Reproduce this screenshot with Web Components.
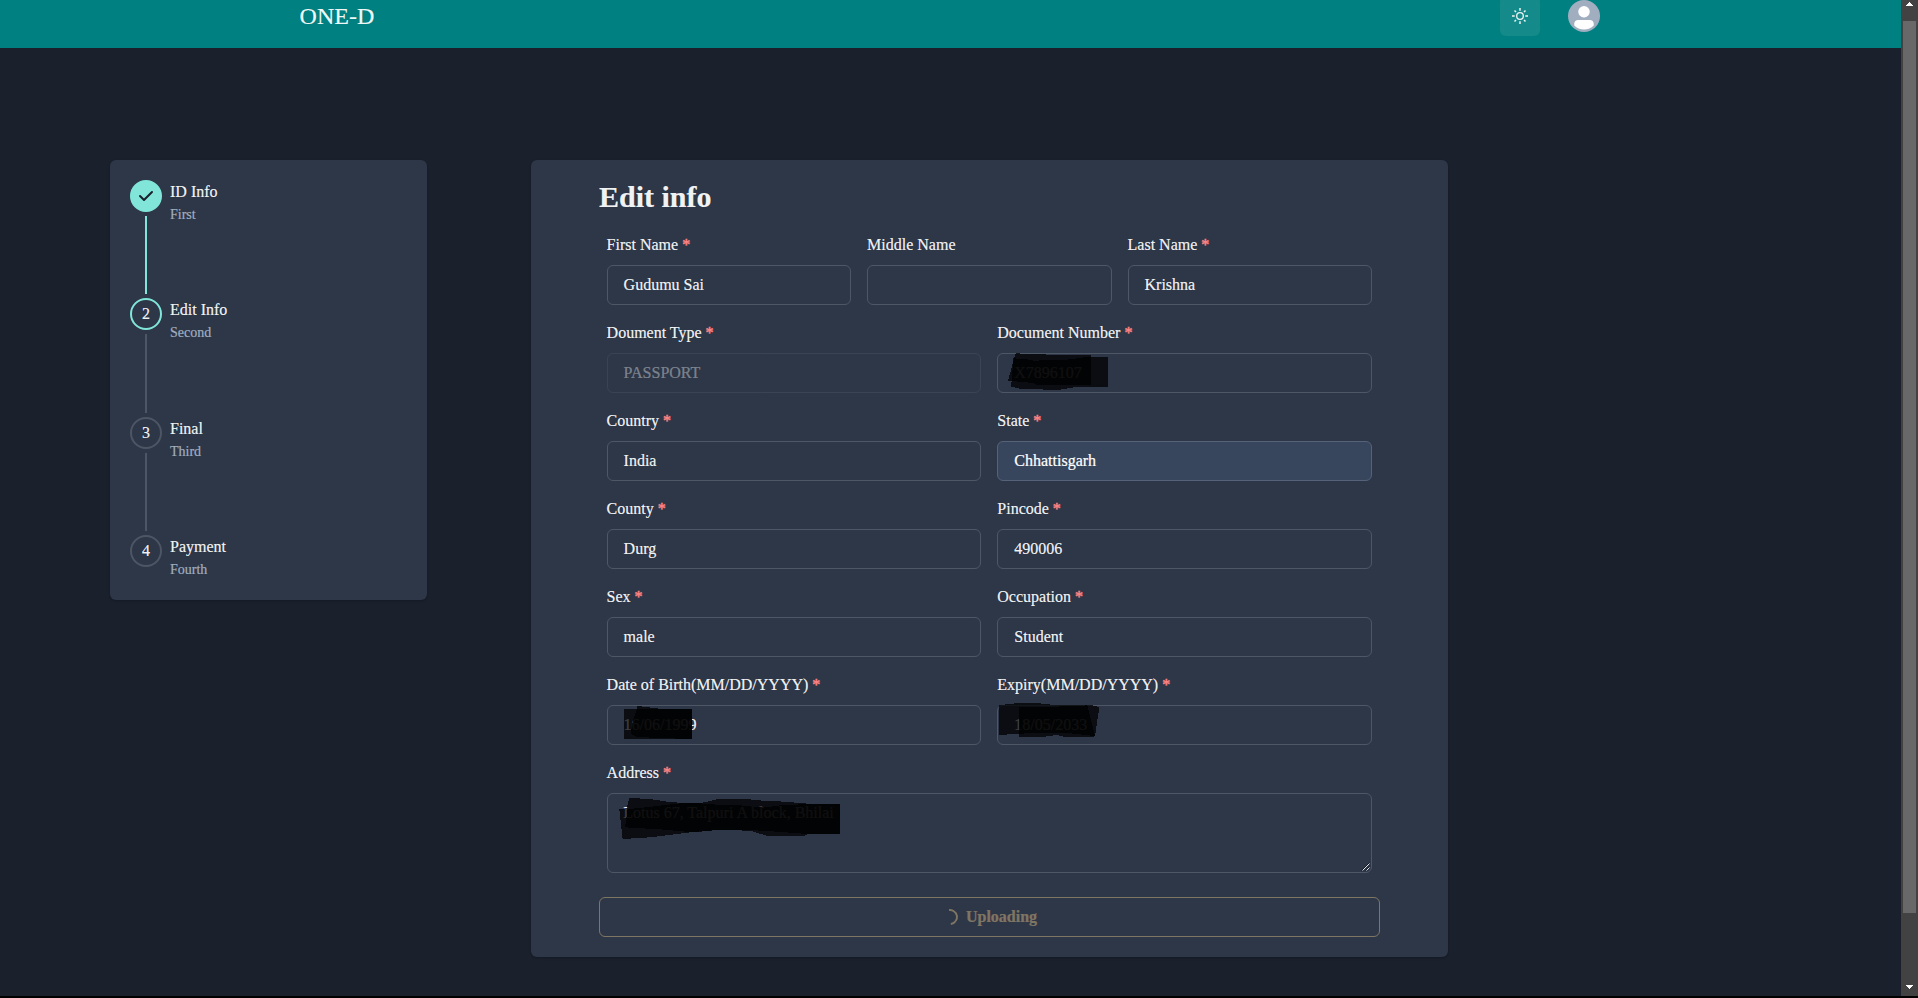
<!DOCTYPE html>
<html lang="en">
<head>
<meta charset="utf-8">
<title>ONE-D</title>
<style>
html,body{margin:0;height:998px;overflow:hidden;background:#000}
body{font:16px/24px "Liberation Serif","Times New Roman",serif;color:rgba(255,255,255,.94);-webkit-text-stroke:.2px}
</style>
</head>
<body>
<app-shell>
  <nav-bar slot="nav">ONE-D</nav-bar>
  <step-list>
    <step-item state="done" num="1" name="ID Info">First</step-item>
    <step-item state="active" num="2" name="Edit Info">Second</step-item>
    <step-item num="3" name="Final">Third</step-item>
    <step-item num="4" name="Payment" last>Fourth</step-item>
  </step-list>
  <edit-card heading="Edit info">
    <form-field label="First Name" required span="2">Gudumu Sai</form-field>
    <form-field label="Middle Name" span="2"></form-field>
    <form-field label="Last Name" required span="2">Krishna</form-field>
    <form-field label="Doument Type" required disabled>PASSPORT</form-field>
    <form-field label="Document Number" required>X7896107<marker-strokes slot="over" dx="-51" dy="-399"
      a="108,396 112,400 145,402 180,402 215,405 333,405 333,494 170,494 160,489 84,482"
      b="100,415 135,417 160,422 262,419 320,411 384,411 384,501 290,501 240,509 130,508 92,500 95,485"></marker-strokes></form-field>
    <form-field label="Country" required>India</form-field>
    <form-field label="State" required filled>Chhattisgarh</form-field>
    <form-field label="County" required>Durg</form-field>
    <form-field label="Pincode" required>490006</form-field>
    <form-field label="Sex" required>male</form-field>
    <form-field label="Occupation" required>Student</form-field>
    <form-field label="Date of Birth(MM/DD/YYYY)" required>16/06/1999<marker-strokes slot="over" dx="-51" dy="-135"
      a="102,147 306,147 306,237 102,237"
      b="143,138 190,144 220,147 306,147 306,237 200,234 140,230 122,222 128,185"></marker-strokes></form-field>
    <form-field label="Expiry(MM/DD/YYYY)" required>18/05/2033<marker-strokes slot="over" dx="-51" dy="-135"
      a="57,135 95,132 110,129 180,130 215,134 322,135 345,228 260,219 160,218 105,223 57,224"
      b="117,142 180,141 300,138 333,135 358,141 345,228 340,231 255,231 230,225 195,230 117,231"></marker-strokes></form-field>
    <form-field label="Address" required span="6" area>Lotus 67, Talpuri A block, Bhilai<marker-strokes slot="over" dx="-51" dy="-399"
      a="118,414 180,417 245,427 330,430 380,418 465,417 530,423 585,425 663,432 750,432 750,521 655,521 645,527 530,527 480,512 380,510 300,517 180,532 98,537 88,447 110,445"
      b="113,447 140,445 210,437 270,430 330,430 380,434 470,437 520,443 570,436 660,432 750,432 750,521 640,521 560,515 480,510 380,510 310,517 210,508 105,502"></marker-strokes></form-field>
    <busy-button slot="action">Uploading</busy-button>
  </edit-card>
</app-shell>

<script>
const define = (name, render) => customElements.define(name, class extends HTMLElement {
  connectedCallback() {
    if (!this.shadowRoot) this.attachShadow({mode: "open"}).innerHTML = render(this);
  }
});
const at = (el, n) => el.getAttribute(n);

define("scroll-track", () => `
<style>
:host{display:flex;flex-direction:column;align-items:center;justify-content:space-between;width:17px;height:996px;background:#424242}
svg{display:block;flex:none}
.thumb{width:13px;height:892px;background:#686868;margin-bottom:auto}
</style>
<svg width="17" height="21" shape-rendering="crispEdges"><path d="M8 2h1v1h1v1h1v1h1v1H5V5h1V4h1V3h1z" fill="#fff"/></svg>
<div class="thumb"></div>
<svg width="17" height="17" shape-rendering="crispEdges"><path d="M5 6h7v1h-1v1h-1v1H9v1H8V9H7V8H6V7H5z" fill="#fff"/></svg>`);

define("app-shell", () => `
<style>
:host{display:flex;height:996px;overflow:hidden;background:#1a202c}
.page{flex:1;min-width:0}
main{display:flex;align-items:flex-start;padding:112px 0 0 110px;gap:104px}
</style>
<div class="page"><slot name="nav"></slot><main><slot></slot></main></div>
<scroll-track></scroll-track>`);

define("nav-bar", () => `
<style>
:host{display:flex;align-items:center;box-sizing:border-box;height:64px;margin-top:-16px;padding:0 301px 0 299.6px;background:#008080}
.brand{font-size:24px;line-height:36px;margin-right:auto}
.toggle{display:flex;align-items:center;justify-content:center;width:40px;height:40px;border-radius:6px;background:rgba(255,255,255,.08);margin-right:28px}
.avatar{width:32px;height:32px;border-radius:50%;background:#a0aec0;overflow:hidden}
svg{display:block}
</style>
<div class="brand"><slot></slot></div>
<div class="toggle"><svg width="16" height="16" viewBox="0 0 16 16" fill="none" stroke="#fff" stroke-opacity=".92" stroke-width="1.33"><circle cx="8" cy="8" r="3.3"/><path stroke-width="1.5" d="M8 0v2.7M8 13.3V16M0 8h2.7M13.3 8H16M2.5 2.5l1.5 1.5M12 12l1.5 1.5M2.5 13.5L4 12M12 4l1.5-1.5"/></svg></div>
<div class="avatar"><svg width="32" height="32" viewBox="0 0 128 128" fill="#fff"><path d="M103,102.1388 C93.094,111.92 79.3504,118 64.1638,118 C48.8056,118 34.9294,111.768 25,101.7892 L25,95.2 C25,86.8096 31.981,80 40.6,80 L87.4,80 C96.019,80 103,86.8096 103,95.2 L103,102.1388 Z"/><circle cx="64" cy="47" r="23"/></svg></div>`);

define("step-list", () => `
<style>
:host{display:flex;flex-direction:column;box-sizing:border-box;flex:none;width:317px;height:440px;padding:20px;border-radius:6px;background:#2d3748;box-shadow:0 1px 3px rgba(0,0,0,.1),0 1px 2px rgba(0,0,0,.06)}
</style><slot></slot>`);

define("step-item", el => {
  const s = at(el, "state");
  return `
<style>
:host{display:flex;gap:8px;flex:1}
:host([last]){flex:none}
.rail{display:flex;flex-direction:column;align-items:center;gap:4px;padding-bottom:4px}
.dot{box-sizing:border-box;flex:none;width:32px;height:32px;border-radius:50%;display:flex;align-items:center;justify-content:center;border:2px solid #4c5664}
:host([state]) .dot{border-color:#81e6d9}
:host([state=done]) .dot{background:#81e6d9}
.line{width:2px;flex:1;background:#4c5664}
:host([state=done]) .line{background:#81e6d9}
.desc{font-size:14px;line-height:21px;color:#a0aec0}
:host([last]) .rail{padding:0;height:45px}
</style>
<div class="rail"><div class="dot">${s === "done" ? `<svg width="20" height="20" viewBox="0 0 20 20" fill="#1a202c"><path d="M16.707 5.293a1 1 0 010 1.414l-8 8a1 1 0 01-1.414 0l-4-4a1 1 0 011.414-1.414L8 12.586l7.293-7.293a1 1 0 011.414 0z"/></svg>` : at(el, "num")}</div>${el.hasAttribute("last") ? "" : `<div class="line"></div>`}</div>
<div><div>${at(el, "name")}</div><div class="desc"><slot></slot></div></div>`;
});

define("edit-card", el => `
<style>
:host{display:block;box-sizing:border-box;flex:none;width:917px;height:797px;padding:19px 68px 20px;border-radius:6px;background:#2d3748;box-shadow:0 1px 3px rgba(0,0,0,.1),0 1px 2px rgba(0,0,0,.06)}
h2{margin:0;font-size:30px;line-height:36px}
.grid{display:grid;grid-template-columns:repeat(6,1fr);gap:16px;padding:18px 8px 24px 7.6px}
</style>
<h2>${at(el, "heading")}</h2>
<div class="grid"><slot></slot></div>
<slot name="action"></slot>`);

define("form-field", el => `
<style>
:host{display:block;grid-column:span ${at(el, "span") || 3};min-width:0}
.label{margin-bottom:8px}
.label b{font-weight:400;color:#fc8181;margin-left:4px;-webkit-text-stroke:.5px}
.box{position:relative;box-sizing:border-box;height:40px;padding:0 16px;border:1px solid #4d5766;border-radius:6px;line-height:38px;white-space:nowrap}
:host([area]) .box{height:80px;padding:8px 15.6px;line-height:22px}
:host([disabled]) .box{opacity:.4}
:host([filled]) .box{background:#38465d;border-color:#56627a;color:#fff}
.grip{position:absolute;right:0;bottom:0;display:block}
</style>
<div class="label">${at(el, "label")}${el.hasAttribute("required") ? "<b>*</b>" : ""}</div>
<div class="box"><slot></slot><slot name="over"></slot>${el.hasAttribute("area") ? `<svg class="grip" width="10" height="10" fill="none"><path d="M0.5 8.5L8.5 0.5M4.5 8.5L8.5 4.5" stroke="#161b24" stroke-width="1"/><path d="M1.5 8.5L8.5 1.5M5.5 8.5L8.5 5.5" stroke="#dfe2e6" stroke-width="1"/></svg>` : ""}</div>`);

/* Marker strokes laid over a value; points are in thirds of a pixel. */
define("marker-strokes", el => `
<style>
:host{position:absolute;left:-1px;top:-1px;display:block}
svg{display:block;overflow:visible}
</style>
<svg width="1" height="1" fill-opacity=".75" shape-rendering="crispEdges"><g transform="scale(.33333) translate(${at(el, "dx")} ${at(el, "dy")})"><polygon points="${at(el, "a")}"/><polygon points="${at(el, "b")}"/></g></svg>`);

define("busy-button", () => `
<style>
:host{display:flex;align-items:center;justify-content:center;gap:8px;box-sizing:border-box;height:40px;border:1px solid #fbd38d;border-radius:6px;color:#fbd38d;font-weight:700;opacity:.4}
i{box-sizing:border-box;width:16px;height:16px;border:2px solid;border-left-color:transparent;border-bottom-color:transparent;border-radius:50%;transform:rotate(38deg)}
</style>
<i></i><span><slot></slot></span>`);
</script>
</body>
</html>
